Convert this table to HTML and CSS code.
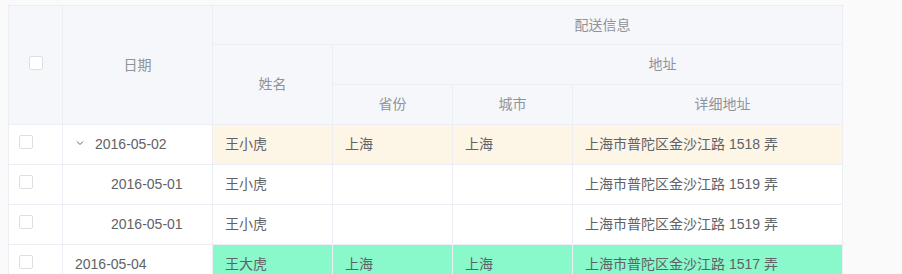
FILE: index.html
```html
<!DOCTYPE html>
<html lang="zh">
<head>
<meta charset="utf-8">
<title>配送信息</title>
<link rel="stylesheet" href="styles.css">
</head>
<body>
<div class="table-wrap">
  <table class="data-table">
    <colgroup>
      <col class="c-sel">
      <col class="c-date">
      <col class="c-name">
      <col class="c-prov">
      <col class="c-city">
      <col class="c-addr">
      <col class="c-zip">
    </colgroup>
    <thead>
      <tr class="h1">
        <th rowspan="3" class="sel-head"><span class="checkbox"></span></th>
        <th rowspan="3">日期</th>
        <th colspan="5">配送信息</th>
      </tr>
      <tr class="h2">
        <th rowspan="2">姓名</th>
        <th colspan="4">地址</th>
      </tr>
      <tr class="h3">
        <th>省份</th>
        <th>城市</th>
        <th>详细地址</th>
        <th></th>
      </tr>
    </thead>
    <tbody>
      <tr class="row warning">
        <td class="sel"><span class="checkbox"></span></td>
        <td class="fixed"><span class="expand"><svg width="8" height="8" viewBox="0 0 8 8"><path d="M1 2.5 L4 5.5 L7 2.5" fill="none" stroke="#606266" stroke-width="1"/></svg></span>2016-05-02</td>
        <td>王小虎</td>
        <td>上海</td>
        <td>上海</td>
        <td>上海市普陀区金沙江路 1518 弄</td>
        <td></td>
      </tr>
      <tr class="row">
        <td class="sel"><span class="checkbox"></span></td>
        <td class="fixed"><span class="indent"></span><span class="placeholder"></span>2016-05-01</td>
        <td>王小虎</td>
        <td></td>
        <td></td>
        <td>上海市普陀区金沙江路 1519 弄</td>
        <td></td>
      </tr>
      <tr class="row">
        <td class="sel"><span class="checkbox"></span></td>
        <td class="fixed"><span class="indent"></span><span class="placeholder"></span>2016-05-01</td>
        <td>王小虎</td>
        <td></td>
        <td></td>
        <td>上海市普陀区金沙江路 1519 弄</td>
        <td></td>
      </tr>
      <tr class="row success">
        <td class="sel"><span class="checkbox"></span></td>
        <td class="fixed">2016-05-04</td>
        <td>王大虎</td>
        <td>上海</td>
        <td>上海</td>
        <td>上海市普陀区金沙江路 1517 弄</td>
        <td></td>
      </tr>
    </tbody>
  </table>
</div>
</body>
</html>
```
FILE: styles.css
```css
html, body {
  margin: 0;
  background: #fafafa;
}
body {
  padding: 5px 8px;
  font-family: "Liberation Sans", "Noto Sans CJK SC", sans-serif;
  font-size: 14px;
  color: #606266;
}
.table-wrap {
  width: 835px;
  box-sizing: border-box;
  border-left: 1px solid #ebeef5;
  border-top: 1px solid #ebeef5;
  border-right: 1px solid #ebeef5;
  overflow: hidden;
  background: #fff;
}
.data-table {
  table-layout: fixed;
  border-collapse: separate;
  border-spacing: 0;
  width: 984px;
}
.c-sel { width: 54px; }
.c-date { width: 150px; }
.c-name, .c-prov, .c-city, .c-zip { width: 120px; }
.c-addr { width: 300px; }
th, td {
  box-sizing: border-box;
  border-right: 1px solid #ebeef5;
  border-bottom: 1px solid #ebeef5;
  padding: 0 0 0 12px;
  white-space: nowrap;
  overflow: hidden;
  line-height: 23px;
}
th {
  background: #f5f7fa;
  color: #909399;
  font-weight: normal;
  text-align: center;
  padding: 0;
}
.h1 th { height: 39px; }
.h2 th, .h3 th { height: 40px; }
td {
  height: 40px;
  text-align: left;
  vertical-align: middle;
}
.checkbox {
  display: inline-block;
  width: 14px;
  height: 14px;
  box-sizing: border-box;
  border: 1px solid #dcdfe6;
  border-radius: 2px;
  background: #fff;
  vertical-align: top;
}
.sel-head .checkbox {
  margin-top: 2px;
}
td.sel {
  padding: 10px 0 0 10px;
  vertical-align: top;
  line-height: 14px;
}
.expand, .placeholder {
  display: inline-block;
  width: 20px;
  height: 20px;
  vertical-align: middle;
  position: relative;
  top: -2px;
}
.expand svg {
  display: block;
  margin: 6px 0 0 1px;
}
.indent {
  display: inline-block;
  width: 16px;
}
.warning td { background: #fdf5e6; }
.success td { background: #89f8cb; }
.row td.sel, .row td.fixed { background: #fff; }
```
